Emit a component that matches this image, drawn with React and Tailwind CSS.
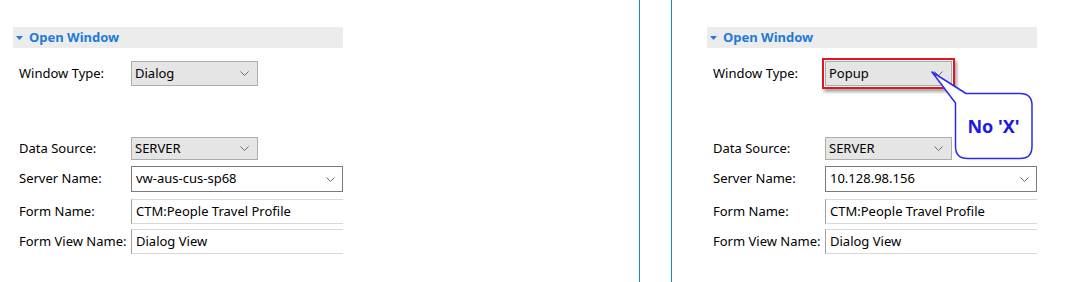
const FONT = { fontFamily: '"Segoe UI", "Noto Sans", "Open Sans", sans-serif' };

function Chevron() {
  return (
    <svg width="9" height="5" viewBox="0 0 9 5" className="shrink-0">
      <polyline points="0.5,0.5 4.5,4.5 8.5,0.5" fill="none" stroke="#6b6b6b" strokeWidth="1" />
    </svg>
  );
}

function Header() {
  return (
    <div className="flex h-[21px] w-[330px] items-center bg-[#ececec] pl-[3px]">
      <svg width="7" height="4" viewBox="0 0 7 4" className="mr-[6px]">
        <polygon points="0,0 7,0 3.5,4" fill="#1e7bd9" />
      </svg>
      <span className="text-[13px] font-bold text-[#1e7bd9]">Open Window</span>
    </div>
  );
}

function Row({ label, children, className = "" }) {
  return (
    <div className={`flex items-center ${className}`}>
      <span className="w-[118px] shrink-0 pl-[6px] text-[13px] text-black">{label}</span>
      {children}
    </div>
  );
}

function GraySelect({ value, height = "h-[25px]" }) {
  return (
    <div className={`flex ${height} w-[127px] items-center justify-between border border-[#adadad] bg-[#e5e5e5] pl-[3px] pr-[8px] text-[13px] text-black`}>
      <span>{value}</span>
      <Chevron />
    </div>
  );
}

function Panel({ windowType, server, highlight }) {
  return (
    <div className="flex w-[330px] flex-col">
      <Header />
      <Row label="Window Type:" className="mt-[13px]">
        {highlight ? (
          <div className="relative">
            <GraySelect value={windowType} />
            <span className="absolute -inset-[3px] border-2 border-[#e3141c] shadow-[2px_3px_3px_rgba(0,0,0,0.35)]" />
          </div>
        ) : (
          <GraySelect value={windowType} />
        )}
      </Row>
      <Row label="Data Source:" className="mt-[51px]">
        <GraySelect value="SERVER" height="h-[23px]" />
      </Row>
      <Row label="Server Name:" className="mt-[6px]">
        <div className="flex h-[26px] w-[212px] items-center justify-between border border-[#7a7a7a] bg-white pl-[4px] pr-[7px] text-[13px] text-black">
          <span>{server}</span>
          <Chevron />
        </div>
      </Row>
      <Row label="Form Name:" className="mt-[7px]">
        <div className="flex h-[25px] flex-1 items-center border-y border-l border-y-[#d9d9d9] border-l-[#a0a0a0] bg-white pl-[4px] text-[13px] text-black">
          CTM:People Travel Profile
        </div>
      </Row>
      <Row label="Form View Name:" className="mt-[5px]">
        <div className="flex h-[25px] flex-1 items-center border-y border-l border-y-[#d9d9d9] border-l-[#a0a0a0] bg-white pl-[4px] text-[13px] text-black">
          Dialog View
        </div>
      </Row>
    </div>
  );
}

function Callout() {
  return (
    <div className="absolute left-[930px] top-[70px]">
      <svg width="105" height="92" viewBox="0 0 105 92">
        <path
          d="M36 23.5 L2 2 L25.5 33 L25.5 76.5 Q25.5 88.5 37.5 88.5 L90 88.5 Q102 88.5 102 76.5 L102 35.5 Q102 23.5 90 23.5 Z"
          fill="white"
          stroke="#2b2bf0"
          strokeWidth="1.5"
          strokeLinejoin="round"
        />
      </svg>
      <span className="absolute left-[25px] top-[23px] flex h-[66px] w-[77px] items-center justify-center text-[18px] font-bold text-[#1a1ae6]">
        No 'X'
      </span>
    </div>
  );
}

export default function App() {
  return (
    <div className="relative flex h-[282px] w-[1086px] overflow-hidden bg-white pt-[27px]" style={FONT}>
      <div className="w-[639px] shrink-0 pl-[13px]">
        <Panel windowType="Dialog" server="vw-aus-cus-sp68" />
      </div>
      <div className="-mt-[27px] h-[282px] w-px shrink-0 bg-[#1a86d0]" />
      <div className="w-[31px] shrink-0" />
      <div className="-mt-[27px] h-[282px] w-px shrink-0 bg-[#1a86d0]" />
      <div className="w-[35px] shrink-0" />
      <Panel windowType="Popup" server="10.128.98.156" highlight />
      <Callout />
    </div>
  );
}
